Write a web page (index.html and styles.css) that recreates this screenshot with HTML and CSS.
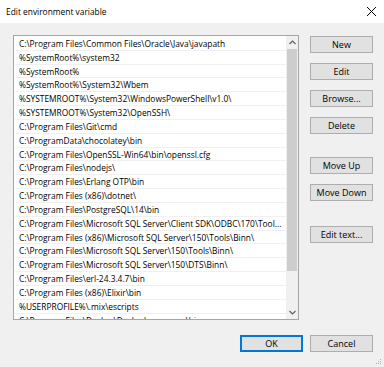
FILE: index.html
```html
<!DOCTYPE html>
<html>
<head>
<meta charset="utf-8">
<link rel="stylesheet" href="styles.css">
</head>
<body>
<div class="dialog">
  <div class="titlebar">
    <span class="title">Edit environment variable</span>
    <svg class="close" width="11" height="11" viewBox="0 0 11 11"><path d="M1 1L10 10M10 1L1 10" stroke="#000" stroke-width="1" fill="none"/></svg>
  </div>
  <div class="main">
    <div class="list">
      <div class="rows">
        <div class="row">C:\Program Files\Common Files\Oracle\Java\javapath</div>
        <div class="row">%SystemRoot%\system32</div>
        <div class="row">%SystemRoot%</div>
        <div class="row">%SystemRoot%\System32\Wbem</div>
        <div class="row">%SYSTEMROOT%\System32\WindowsPowerShell\v1.0\</div>
        <div class="row">%SYSTEMROOT%\System32\OpenSSH\</div>
        <div class="row">C:\Program Files\Git\cmd</div>
        <div class="row">C:\ProgramData\chocolatey\bin</div>
        <div class="row">C:\Program Files\OpenSSL-Win64\bin\openssl.cfg</div>
        <div class="row">C:\Program Files\nodejs\</div>
        <div class="row">C:\Program Files\Erlang OTP\bin</div>
        <div class="row">C:\Program Files (x86)\dotnet\</div>
        <div class="row">C:\Program Files\PostgreSQL\14\bin</div>
        <div class="row">C:\Program Files\Microsoft SQL Server\Client SDK\ODBC\170\Tool...</div>
        <div class="row">C:\Program Files (x86)\Microsoft SQL Server\150\Tools\Binn\</div>
        <div class="row">C:\Program Files\Microsoft SQL Server\150\Tools\Binn\</div>
        <div class="row">C:\Program Files\Microsoft SQL Server\150\DTS\Binn\</div>
        <div class="row">C:\Program Files\erl-24.3.4.7\bin</div>
        <div class="row">C:\Program Files (x86)\Elixir\bin</div>
        <div class="row">%USERPROFILE%\.mix\escripts</div>
        <div class="row">C:\Program Files\Docker\Docker\resources\bin</div>
      </div>
      <div class="scrollbar">
        <div class="arrow up"><svg width="7" height="5" viewBox="0 0 7 5"><path d="M0.5 4L3.5 1L6.5 4" stroke="#606060" stroke-width="1.2" fill="none"/></svg></div>
        <div class="track"><div class="thumb"></div></div>
        <div class="arrow down"><svg width="7" height="5" viewBox="0 0 7 5"><path d="M0.5 1L3.5 4L6.5 1" stroke="#606060" stroke-width="1.2" fill="none"/></svg></div>
      </div>
    </div>
    <div class="buttons">
      <div class="btn">New</div>
      <div class="btn">Edit</div>
      <div class="btn">Browse...</div>
      <div class="btn">Delete</div>
      <div class="btn group">Move Up</div>
      <div class="btn">Move Down</div>
      <div class="btn group2">Edit text...</div>
    </div>
  </div>
  <div class="footer">
    <div class="btn default">OK</div>
    <div class="btn">Cancel</div>
  </div>
  <svg class="grip" width="6" height="6" viewBox="0 0 6 6"><rect x="4" y="0" width="1" height="1" fill="#b0b0b0"/><rect x="2" y="2" width="1" height="1" fill="#b0b0b0"/><rect x="4" y="2" width="1" height="1" fill="#b0b0b0"/><rect x="0" y="4" width="1" height="1" fill="#b0b0b0"/><rect x="2" y="4" width="1" height="1" fill="#b0b0b0"/><rect x="4" y="4" width="1" height="1" fill="#b0b0b0"/></svg>
</div>
</body>
</html>
```

FILE: styles.css
```css
* { box-sizing: border-box; }
html, body { margin: 0; padding: 0; }
body {
  width: 384px;
  height: 367px;
  overflow: hidden;
  font-family: "Open Sans", "Noto Sans", sans-serif;
  font-size: 8.4px;
  color: #000;
}
.dialog {
  position: relative;
  width: 384px;
  height: 367px;
  background: #f0f0f0;
}
.titlebar {
  height: 23px;
  background: #fff;
  display: flex;
  align-items: center;
  justify-content: space-between;
  padding: 0 7px 0 6px;
}
.title { font-size: 8.4px; }
.main {
  display: flex;
  padding: 12px 0 0 13px;
  gap: 11px;
}
.list {
  width: 286px;
  height: 285px;
  border: 1px solid #a6a6a6;
  background: #fff;
  display: flex;
  overflow: hidden;
}
.rows {
  flex: 1;
  min-width: 0;
  overflow: hidden;
  padding: 1px 0 0 1px;
}
.row {
  height: 13.84px;
  line-height: 13px;
  padding-left: 4px;
  white-space: nowrap;
  overflow: hidden;
  border-bottom: 1px solid #f0f0f0;
}
.scrollbar {
  width: 12px;
  flex: none;
  display: flex;
  flex-direction: column;
  background: #f0f0f0;
}
.arrow {
  height: 13px;
  display: flex;
  align-items: center;
  justify-content: center;
}
.track { flex: 1; display: flex; flex-direction: column; padding: 0 1px; }
.thumb {
  height: 222px;
  background: #cdcdcd;
}
.buttons {
  width: 63px;
  display: flex;
  flex-direction: column;
  padding-top: 1px;
  gap: 10px;
}
.btn {
  height: 17px;
  border: 1px solid #adadad;
  background: #e1e1e1;
  display: flex;
  align-items: center;
  justify-content: center;
  font-size: 9px;
  white-space: nowrap;
}
.buttons .group { margin-top: 13px; }
.buttons .group2 { margin-top: 15px; }
.footer {
  display: flex;
  justify-content: flex-end;
  gap: 7px;
  padding: 15px 11px 0 0;
}
.footer .btn { width: 63px; }
.footer .default { border: 2px solid #0078d7; }
.grip { position: absolute; right: 2px; bottom: 2px; }
```
